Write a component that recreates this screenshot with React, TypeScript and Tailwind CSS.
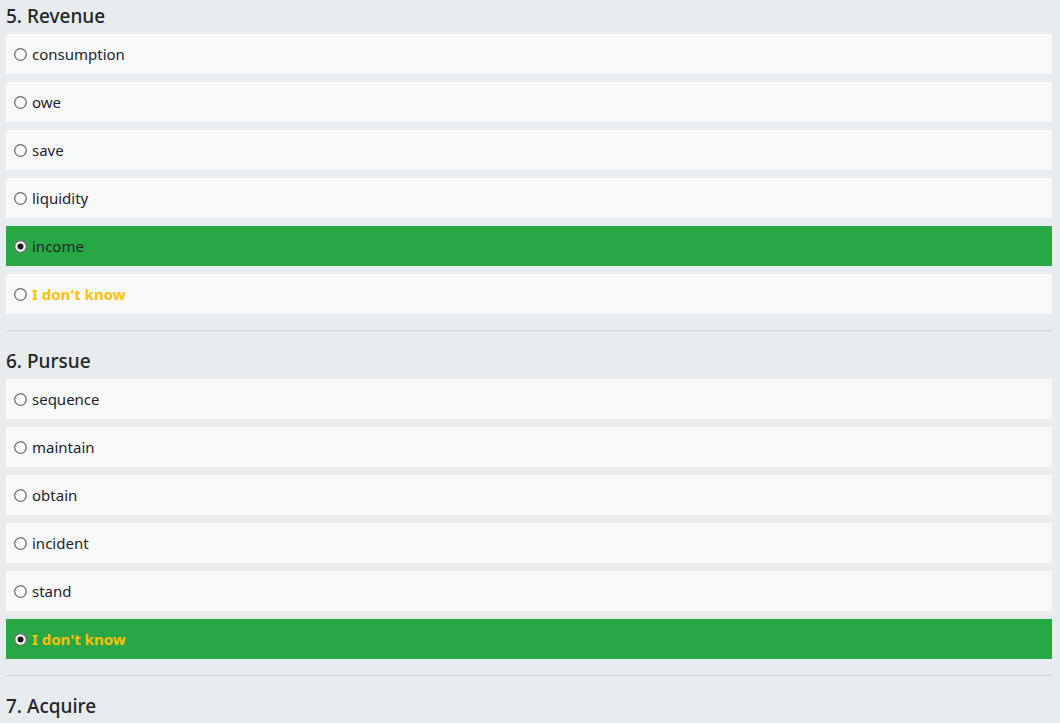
import React from "react";

type Q = { title: string; options: string[]; selected: number };

const questions: Q[] = [
  { title: "5. Revenue", options: ["consumption", "owe", "save", "liquidity", "income", "I don't know"], selected: 4 },
  { title: "6. Pursue", options: ["sequence", "maintain", "obtain", "incident", "stand", "I don't know"], selected: 5 },
  { title: "7. Acquire", options: [], selected: -1 },
];

function Radio({ checked }: { checked: boolean }) {
  return (
    <svg width="13" height="13" viewBox="0 0 13 13" className="shrink-0">
      <circle cx="6.5" cy="6.5" r="5.8" fill="#ffffff" stroke="#6e6e6e" strokeWidth="1.3" />
      {checked && <circle cx="6.5" cy="6.5" r="3" fill="#1a1a1a" />}
    </svg>
  );
}

export default function App() {
  return (
    <div
      className="min-h-screen bg-[#e9ecef] pl-[6px] pr-[8px] pt-[2px] text-[#212529]"
      style={{ fontFamily: '"Noto Sans", "Open Sans", Arial, sans-serif' }}
    >
      {questions.map((q, qi) => (
        <div key={qi}>
          {qi > 0 && <div className="my-4 border-t border-[#d0d3d6]" />}
          <h5 className="mb-[6px] pt-[2px] text-[19px] font-medium leading-[24px]">{q.title}</h5>
          <div className="flex flex-col gap-2">
            {q.options.map((o, oi) => {
              const checked = oi === q.selected;
              const idk = o === "I don't know";
              return (
                <label
                  key={oi}
                  className={
                    "flex h-10 items-center gap-[5px] pl-[8px] " +
                    (checked ? "bg-[#28a745]" : "bg-[#f8f9fa]")
                  }
                >
                  <Radio checked={checked} />
                  <span
                    className={
                      "text-[15px] leading-6 " +
                      (idk ? "font-bold text-[#ffc107]" : "text-[#212529]")
                    }
                  >
                    {o}
                  </span>
                </label>
              );
            })}
          </div>
        </div>
      ))}
    </div>
  );
}
